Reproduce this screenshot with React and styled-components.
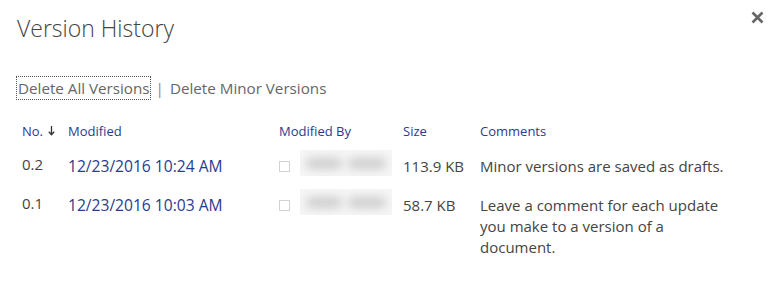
import React from 'react';
import styled, { createGlobalStyle } from 'styled-components';

const GlobalStyle = createGlobalStyle`
    html, body {
        margin: 0;
        padding: 0;
        background: #fff;
    }
    body {
        font-family: "Segoe UI", "Open Sans", sans-serif;
        color: #444;
    }
`

const Dialog = styled.div`
    position: relative;
    width: 778px;
    height: 304px;
    box-sizing: border-box;
    padding: 10px 0 0 17px;
    background: #fff;
`

const Title = styled.h1`
    margin: 0;
    font-size: 23px;
    font-weight: 300;
    line-height: 36px;
    color: #444;
`

const CloseButton = styled.button`
    position: absolute;
    top: 6px;
    right: 10px;
    width: 22px;
    height: 22px;
    padding: 0;
    border: 0;
    background: none;
    display: flex;
    align-items: center;
    justify-content: center;
    cursor: pointer;
`

const Actions = styled.div`
    margin-top: 31px;
    display: flex;
    align-items: center;
    font-size: 15.2px;
    line-height: 20px;
    color: #666;
`

const ActionLink = styled.a`
    color: #666;
    text-decoration: none;
    padding: 1px 0 1px 1px;
    outline: ${p => (p.$focused ? '1px dotted #555' : 'none')};
`

const Divider = styled.span`
    margin: 0 5px 0 6px;
    color: #888;
`

const Grid = styled.div`
    margin-top: 23px;
    margin-left: 5px;
    display: grid;
    grid-template-columns: 46px 211px 124px 77px 255px;
    font-size: 15px;
`

const HeadCell = styled.div`
    font-size: 13px;
    line-height: 18px;
    color: #2a3b8f;
    padding-bottom: 16px;
    display: flex;
    align-items: center;
    gap: 5px;
`

const Cell = styled.div`
    line-height: 21px;
    font-size: ${p => (p.$link ? '15.6px' : '15px')};
    color: ${p => (p.$link ? '#2a3b8f' : '#444')};
    padding-bottom: 18px;
    margin-top: ${p => (p.$raised ? '-2px' : '0')};
`

const UserCell = styled.div`
    display: flex;
    align-items: flex-start;
    gap: 10px;
    padding-bottom: 18px;
`

const Check = styled.span`
    width: 9px;
    height: 9px;
    margin-top: 5px;
    border: 1px solid #d2d2d2;
    flex: none;
`

const BlurName = styled.span`
    width: 92px;
    height: 26px;
    margin-top: -6px;
    background: #f6f6f6;
    display: flex;
    align-items: center;
    gap: 6px;
    padding: 0 6px;
    box-sizing: border-box;
    overflow: hidden;
`

const Smudge = styled.span`
    height: 11px;
    width: ${p => p.$w}px;
    border-radius: 6px;
    background: #cdcdcd;
    filter: blur(5px);
`

const rows = [
    { no: '0.2', modified: '12/23/2016 10:24 AM', size: '113.9 KB', comment: 'Minor versions are saved as drafts.' },
    { no: '0.1', modified: '12/23/2016 10:03 AM', size: '58.7 KB', comment: 'Leave a comment for each update you make to a version of a document.' }
];

export default function App() {
    return (
        <Dialog>
            <GlobalStyle />
            <Title>Version History</Title>
            <CloseButton aria-label="Close">
                <svg width="13" height="13" viewBox="0 0 13 13">
                    <path d="M1.5 1.5 L11.5 11.5 M11.5 1.5 L1.5 11.5" stroke="#666" strokeWidth="2.6" />
                </svg>
            </CloseButton>
            <Actions>
                <ActionLink href="#" $focused>Delete All Versions</ActionLink>
                <Divider>|</Divider>
                <ActionLink href="#">Delete Minor Versions</ActionLink>
            </Actions>
            <Grid>
                <HeadCell>
                    No.
                    <svg width="7" height="10" viewBox="0 0 7 10">
                        <path d="M3.5 0 V8.5 M0.8 5.8 L3.5 8.8 L6.2 5.8" stroke="#333" strokeWidth="1.3" fill="none" />
                    </svg>
                </HeadCell>
                <HeadCell>Modified</HeadCell>
                <HeadCell>Modified By</HeadCell>
                <HeadCell>Size</HeadCell>
                <HeadCell>Comments</HeadCell>
                {rows.map(r => (
                    <React.Fragment key={r.no}>
                        <Cell $raised>{r.no}</Cell>
                        <Cell $link>{r.modified}</Cell>
                        <UserCell>
                            <Check />
                            <BlurName>
                                <Smudge $w={36} />
                                <Smudge $w={38} />
                            </BlurName>
                        </UserCell>
                        <Cell>{r.size}</Cell>
                        <Cell>{r.comment}</Cell>
                    </React.Fragment>
                ))}
            </Grid>
        </Dialog>
    );
}
